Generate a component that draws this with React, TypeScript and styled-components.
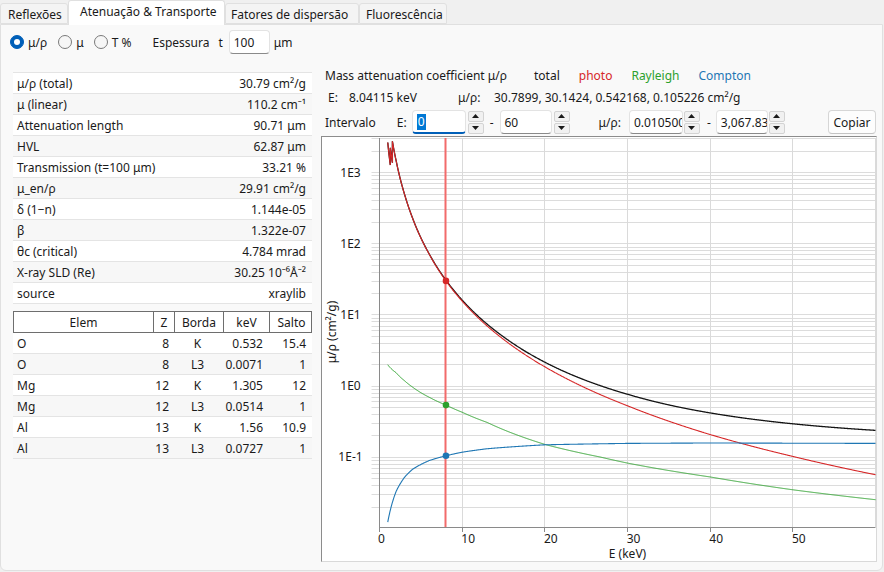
import React, { useMemo } from "react";
import styled, { createGlobalStyle } from "styled-components";

const GlobalStyle = createGlobalStyle`
  html, body { margin: 0; padding: 0; }
  body {
    background: #f0f0f0;
    font-family: "Noto Sans", "Open Sans", "DejaVu Sans", sans-serif;
    font-size: 12px;
    color: #1a1a1a;
  }
  * { box-sizing: border-box; }
`;

/* ---------- window & tabs ---------- */

const Window = styled.div`
  width: 884px;
  height: 572px;
  display: flex;
  flex-direction: column;
  overflow: hidden;
`;

const TabBar = styled.div`
  height: 24px;
  display: flex;
  align-items: flex-end;
`;

const Tab = styled.div<{ $active?: boolean; $w: number; $pl: number }>`
  position: relative;
  z-index: ${(p) => (p.$active ? 2 : 0)};
  width: ${(p) => p.$w}px;
  height: ${(p) => (p.$active ? 25 : 21)}px;
  margin-bottom: ${(p) => (p.$active ? -1 : 0)}px;
  padding-left: ${(p) => p.$pl}px;
  padding-top: 3px;
  background: ${(p) => (p.$active ? "#ffffff" : "#f4f4f4")};
  border: 1px solid #e0e0e0;
  border-bottom: ${(p) => (p.$active ? "none" : "1px solid #e0e0e0")};
  border-radius: 3px 3px 0 0;
  white-space: nowrap;
  line-height: 16px;
`;

const Pane = styled.div`
  flex: 1;
  margin: 0 1px 1px 0;
  background: #f9f9f9;
  border: 1px solid #e0e0e0;
  border-radius: 0 0 6px 6px;
  display: flex;
  flex-direction: column;
`;

/* ---------- top controls ---------- */

const ControlsRow = styled.div`
  margin-top: 5px;
  height: 24px;
  padding-left: 9px;
  display: flex;
  align-items: center;
`;

const RadioItem = styled.label<{ $ml?: number }>`
  display: inline-flex;
  align-items: center;
  gap: 4px;
  margin-left: ${(p) => p.$ml ?? 0}px;
`;

const RadioDot = styled.span<{ $on?: boolean }>`
  width: 14px;
  height: 14px;
  border-radius: 50%;
  border: 1px solid ${(p) => (p.$on ? "#005fb8" : "#7a7a7a")};
  background: ${(p) => (p.$on ? "#005fb8" : "#f6f6f6")};
  display: inline-flex;
  align-items: center;
  justify-content: center;
  &::after {
    content: "";
    width: 6px;
    height: 6px;
    border-radius: 50%;
    background: ${(p) => (p.$on ? "#ffffff" : "transparent")};
  }
`;

const Label = styled.span<{ $ml?: number; $w?: number }>`
  margin-left: ${(p) => p.$ml ?? 0}px;
  ${(p) => (p.$w ? `width: ${p.$w}px; flex: none;` : "")}
  white-space: nowrap;
`;

const TextBox = styled.div<{ $w: number; $ml?: number; $focus?: boolean }>`
  width: ${(p) => p.$w}px;
  height: 24px;
  margin-left: ${(p) => p.$ml ?? 0}px;
  flex: none;
  background: #ffffff;
  border: 1px solid #e3e3e3;
  border-bottom: ${(p) => (p.$focus ? "2px solid #005fb8" : "1px solid #8a8a8a")};
  border-radius: 4px;
  padding-left: 4px;
  display: flex;
  align-items: center;
  overflow: hidden;
  white-space: nowrap;
`;

const Selected = styled.span`
  background: #0078d4;
  color: #ffffff;
  padding: 0 1px;
  line-height: 16px;
`;

const SpinCol = styled.div<{ $ml?: number }>`
  width: 16px;
  height: 23px;
  margin-left: ${(p) => p.$ml ?? 1}px;
  flex: none;
  display: flex;
  flex-direction: column;
  gap: 1px;
`;

const SpinBtn = styled.div`
  flex: 1;
  background: #f1f1f1;
  border: 1px solid #d3d3d3;
  border-radius: 2px;
  display: flex;
  align-items: center;
  justify-content: center;
`;

const Spin: React.FC<{ ml?: number }> = ({ ml }) => (
  <SpinCol $ml={ml}>
    <SpinBtn>
      <svg width="7" height="4" viewBox="0 0 7 4">
        <path d="M0 4 L3.5 0 L7 4 Z" fill="#1a1a1a" />
      </svg>
    </SpinBtn>
    <SpinBtn>
      <svg width="7" height="4" viewBox="0 0 7 4">
        <path d="M0 0 L3.5 4 L7 0 Z" fill="#1a1a1a" />
      </svg>
    </SpinBtn>
  </SpinCol>
);

const Button = styled.button`
  margin-left: auto;
  margin-right: 1px;
  width: 48px;
  height: 24px;
  background: #fdfdfd;
  border: 1px solid #d6d6d6;
  border-bottom-color: #c4c4c4;
  border-radius: 4px;
  font: inherit;
  color: #1a1a1a;
  padding: 0;
`;

/* ---------- body ---------- */

const Body = styled.div`
  margin-top: 10px;
  display: flex;
  flex: 1;
`;

const LeftCol = styled.div`
  width: 299px;
  margin-left: 12px;
  padding-top: 8px;
  flex: none;
`;

const PropTable = styled.div`
  border-top: 1px solid #e4e4e4;
`;

const PropRow = styled.div<{ $alt?: boolean }>`
  height: 21px;
  display: flex;
  align-items: center;
  justify-content: space-between;
  padding: 0 6px 0 4px;
  background: ${(p) => (p.$alt ? "#f7f7f7" : "#ffffff")};
  border-bottom: 1px solid #e4e4e4;
  white-space: nowrap;
`;

const COLS = "139px 21px 49px 46px 44px";

const ElemTable = styled.div`
  margin-top: 7px;
`;

const ElemHead = styled.div`
  display: grid;
  grid-template-columns: ${COLS};
  height: 22px;
  background: #ffffff;
  border: 1px solid #6e6e6e;
`;

const HeadCell = styled.div<{ $first?: boolean }>`
  display: flex;
  align-items: center;
  justify-content: center;
  border-left: ${(p) => (p.$first ? "none" : "1px solid #6e6e6e")};
`;

const ElemRow = styled.div<{ $alt?: boolean }>`
  display: grid;
  grid-template-columns: ${COLS};
  height: 21px;
  background: ${(p) => (p.$alt ? "#f7f7f7" : "#ffffff")};
  border-bottom: 1px solid #e4e4e4;
`;

const Cell = styled.div<{ $align: "left" | "right" | "center"; $pr?: number }>`
  display: flex;
  align-items: center;
  justify-content: ${(p) =>
    p.$align === "left" ? "flex-start" : p.$align === "right" ? "flex-end" : "center"};
  padding-left: ${(p) => (p.$align === "left" ? 4 : 0)}px;
  padding-right: ${(p) => (p.$align === "right" ? p.$pr ?? 5 : 0)}px;
`;

const RightCol = styled.div`
  margin-left: 9px;
  width: 556px;
  flex: none;
  display: flex;
  flex-direction: column;
  padding-top: 2px;
`;

const InfoLine = styled.div<{ $pl: number; $mt?: number }>`
  height: 18px;
  margin-top: ${(p) => p.$mt ?? 0}px;
  padding-left: ${(p) => p.$pl}px;
  display: flex;
  align-items: center;
  white-space: nowrap;
`;

const Legend = styled.span<{ $color: string; $ml: number }>`
  color: ${(p) => p.$color};
  margin-left: ${(p) => p.$ml}px;
`;

const RangeRow = styled.div`
  margin-top: 4px;
  height: 24px;
  padding-left: 4px;
  display: flex;
  align-items: center;
  white-space: nowrap;
`;

const ChartFrame = styled.div`
  margin-top: 2px;
  height: 426px;
  background: #ffffff;
  border-top: 1px solid #8c8c8c;
  border-left: 1px solid #8c8c8c;
  border-right: 1px solid #d9d9d9;
  border-bottom: 1px solid #d9d9d9;
  display: flex;
`;

/* ---------- data ---------- */

type Pt = [number, number];

// photoelectric absorption of the compound (cm²/g), with the Mg and Al K edges
const PHOTO: Pt[] = [
  [1.0, 2648], [1.3049, 1278], [1.305, 2228], [1.5599, 1378], [1.56, 2758],
  [2.0, 1494], [3.0, 509], [4.0, 229], [5.0, 121], [6.0, 71.8],
  [8.04115, 30.1424], [10, 15.65], [15, 4.55], [20, 1.87], [30, 0.53],
  [40, 0.209], [50, 0.103], [60, 0.057],
];

const RAYLEIGH: Pt[] = [
  [1.0, 2.0], [2.0, 1.55], [3.0, 1.2], [4.0, 0.97], [6.0, 0.70],
  [8.04115, 0.542168], [10, 0.43], [13, 0.31], [20, 0.152], [26.7, 0.101],
  [30, 0.083], [40, 0.053], [50, 0.035], [60, 0.0254],
];

const COMPTON: Pt[] = [
  [1.0, 0.0123], [1.5, 0.022], [2.0, 0.033], [3.0, 0.052], [4.0, 0.068],
  [6.0, 0.09], [8.04115, 0.105226], [10, 0.118], [13, 0.132], [20, 0.15],
  [30, 0.157], [40, 0.159], [50, 0.158], [60, 0.157],
];

const interp = (table: Pt[], e: number): number => {
  if (e <= table[0][0]) return table[0][1];
  for (let i = 0; i < table.length - 1; i++) {
    const [e0, v0] = table[i];
    const [e1, v1] = table[i + 1];
    if (e >= e0 && e <= e1) {
      const t = (Math.log(e) - Math.log(e0)) / (Math.log(e1) - Math.log(e0));
      return Math.exp(Math.log(v0) + t * (Math.log(v1) - Math.log(v0)));
    }
  }
  return table[table.length - 1][1];
};

const E_CUR = 8.04115;
const V_MAX = 3067.83;
const V_MIN = 0.0105;

// plot area inside the chart frame (svg coordinates)
const PL = 57.5;
const PR = 553.5;
const PT = 1;
const PB = 390;

const xOf = (e: number) => PL + (e / 60) * (PR - PL);
const yOf = (v: number) =>
  PT + ((Math.log10(V_MAX) - Math.log10(v)) / (Math.log10(V_MAX) - Math.log10(V_MIN))) * (PB - PT);

const crisp = (v: number) => Math.floor(v) + 0.5;

const Chart: React.FC = () => {
  const { total, photo, rayl, comp, hLines } = useMemo(() => {
    const es = new Set<number>();
    for (let e = 1.0; e <= 60.0001; e += 0.05) es.add(Math.round(e * 1000) / 1000);
    PHOTO.forEach(([e]) => es.add(e));
    const list = Array.from(es).sort((a, b) => a - b);
    const path = (f: (e: number) => number) =>
      list
        .map((e, i) => `${i ? "L" : "M"}${xOf(e).toFixed(2)},${yOf(f(e)).toFixed(2)}`)
        .join("");
    const lines: number[] = [];
    for (let d = -2; d <= 3; d++) {
      for (let m = 1; m <= 9; m++) {
        const v = m * Math.pow(10, d);
        if (v >= V_MIN && v <= V_MAX) lines.push(crisp(yOf(v)));
      }
    }
    return {
      total: path((e) => interp(PHOTO, e) + interp(RAYLEIGH, e) + interp(COMPTON, e)),
      photo: path((e) => interp(PHOTO, e)),
      rayl: path((e) => interp(RAYLEIGH, e)),
      comp: path((e) => interp(COMPTON, e)),
      hLines: lines,
    };
  }, []);

  const xc = crisp(xOf(E_CUR));
  const decades = [3, 2, 1, 0, -1];

  return (
    <svg width="554" height="424" viewBox="0 0 554 424" fontFamily="Noto Sans, Open Sans, sans-serif" fontSize="12">
      <defs>
        <clipPath id="plot-area">
          <rect x={PL} y={PT} width={PR - PL + 1} height={PB - PT} />
        </clipPath>
      </defs>

      {hLines.map((y, i) => (
        <line key={`h${i}`} x1={PL - 8} x2={PR} y1={y} y2={y} stroke="#dcdcdc" strokeWidth="1" />
      ))}
      {[10, 20, 30, 40, 50, 60].map((e) => (
        <line key={`v${e}`} x1={crisp(xOf(e))} x2={crisp(xOf(e))} y1={PT} y2={PB} stroke="#dadada" strokeWidth="1" />
      ))}

      <line x1={PL} x2={PL} y1={PT} y2={PB + 0.5} stroke="#8a8a8a" strokeWidth="1" />
      <line x1={PL} x2={PR} y1={PB + 0.5} y2={PB + 0.5} stroke="#8a8a8a" strokeWidth="1" />
      {[0, 10, 20, 30, 40, 50].map((e) => (
        <line key={`t${e}`} x1={crisp(xOf(e))} x2={crisp(xOf(e))} y1={PB} y2={PB + 5} stroke="#8a8a8a" strokeWidth="1" />
      ))}

      {decades.map((d) => (
        <text key={`y${d}`} x="28.5" y={yOf(Math.pow(10, d)) + 4} textAnchor="middle" fill="#1a1a1a">
          {`1E${d}`}
        </text>
      ))}
      {[0, 10, 20, 30, 40, 50].map((e) => (
        <text key={`x${e}`} x={xOf(e) + (e === 0 ? 2 : 6)} y="406" textAnchor="middle" fill="#1a1a1a">
          {e}
        </text>
      ))}
      <text x={(PL + PR) / 2} y="420.5" textAnchor="middle" fill="#1a1a1a">E (keV)</text>
      <text transform="translate(13.5 195) rotate(-90)" textAnchor="middle" fill="#1a1a1a">
        μ/ρ (cm²/g)
      </text>

      <g clipPath="url(#plot-area)">
        <line x1={xc} x2={xc} y1={PT - 1} y2={PB} stroke="#f26b6b" strokeWidth="2" />
        <path d={total} fill="none" stroke="#141414" strokeWidth="1.3" />
        <path d={photo} fill="none" stroke="#d62728" strokeWidth="1.1" />
        <path d={rayl} fill="none" stroke="#2ca02c" strokeWidth="1" />
        <path d={comp} fill="none" stroke="#1f77b4" strokeWidth="1.1" />
      </g>

      <circle cx={xOf(E_CUR)} cy={yOf(30.1424)} r="3.3" fill="#d62728" />
      <circle cx={xOf(E_CUR)} cy={yOf(0.542168)} r="3.3" fill="#2ca02c" />
      <circle cx={xOf(E_CUR)} cy={yOf(0.105226)} r="3.3" fill="#1f77b4" />
    </svg>
  );
};

const PROPS: [string, string][] = [
  ["μ/ρ (total)", "30.79 cm²/g"],
  ["μ (linear)", "110.2 cm⁻¹"],
  ["Attenuation length", "90.71 μm"],
  ["HVL", "62.87 μm"],
  ["Transmission (t=100 μm)", "33.21 %"],
  ["μ_en/ρ", "29.91 cm²/g"],
  ["δ (1−n)", "1.144e-05"],
  ["β", "1.322e-07"],
  ["θc (critical)", "4.784 mrad"],
  ["X-ray SLD (Re)", "30.25 10⁻⁶Å⁻²"],
  ["source", "xraylib"],
];

const EDGES: [string, number, string, string, string][] = [
  ["O", 8, "K", "0.532", "15.4"],
  ["O", 8, "L3", "0.0071", "1"],
  ["Mg", 12, "K", "1.305", "12"],
  ["Mg", 12, "L3", "0.0514", "1"],
  ["Al", 13, "K", "1.56", "10.9"],
  ["Al", 13, "L3", "0.0727", "1"],
];

export default function App() {
  return (
    <>
      <GlobalStyle />
      <Window>
        <TabBar>
          <Tab $w={68} $pl={7}>Reflexões</Tab>
          <Tab $w={157} $pl={11} $active>Atenuação &amp; Transporte</Tab>
          <Tab $w={134} $pl={5}>Fatores de dispersão</Tab>
          <Tab $w={88} $pl={6}>Fluorescência</Tab>
        </TabBar>
        <Pane>
          <ControlsRow>
            <RadioItem>
              <RadioDot $on />
              μ/ρ
            </RadioItem>
            <RadioItem $ml={11}>
              <RadioDot />
              μ
            </RadioItem>
            <RadioItem $ml={10}>
              <RadioDot />
              T %
            </RadioItem>
            <Label $ml={21}>Espessura</Label>
            <Label $ml={9}>t</Label>
            <TextBox $w={41} $ml={6}>100</TextBox>
            <Label $ml={4}>μm</Label>
          </ControlsRow>

          <Body>
            <LeftCol>
              <PropTable>
                {PROPS.map(([k, v], i) => (
                  <PropRow key={k} $alt={i % 2 === 1}>
                    <span>{k}</span>
                    <span>{v}</span>
                  </PropRow>
                ))}
              </PropTable>

              <ElemTable>
                <ElemHead>
                  <HeadCell $first>Elem</HeadCell>
                  <HeadCell>Z</HeadCell>
                  <HeadCell>Borda</HeadCell>
                  <HeadCell>keV</HeadCell>
                  <HeadCell>Salto</HeadCell>
                </ElemHead>
                {EDGES.map(([el, z, edge, kev, jump], i) => (
                  <ElemRow key={`${el}${edge}`} $alt={i % 2 === 1}>
                    <Cell $align="left">{el}</Cell>
                    <Cell $align="right" $pr={4}>{z}</Cell>
                    <Cell $align="center">{edge}</Cell>
                    <Cell $align="right" $pr={5}>{kev}</Cell>
                    <Cell $align="right" $pr={6}>{jump}</Cell>
                  </ElemRow>
                ))}
              </ElemTable>
            </LeftCol>

            <RightCol>
              <InfoLine $pl={4}>
                <span>Mass attenuation coefficient μ/ρ</span>
                <Legend $color="#1a1a1a" $ml={27}>total</Legend>
                <Legend $color="#d62728" $ml={19}>photo</Legend>
                <Legend $color="#2ca02c" $ml={19}>Rayleigh</Legend>
                <Legend $color="#1f77b4" $ml={19}>Compton</Legend>
              </InfoLine>
              <InfoLine $pl={7} $mt={4}>
                <Label $w={21}>E:</Label>
                <Label $w={109}>8.04115 keV</Label>
                <Label $w={36}>μ/ρ:</Label>
                <span>30.7899, 30.1424, 0.542168, 0.105226 cm²/g</span>
              </InfoLine>
              <RangeRow>
                <Label>Intervalo</Label>
                <Label $ml={21}>E:</Label>
                <TextBox $w={54} $ml={5} $focus>
                  <Selected>0</Selected>
                </TextBox>
                <Spin ml={2} />
                <Label $ml={6}>-</Label>
                <TextBox $w={52} $ml={6}>60</TextBox>
                <Spin ml={2} />
                <Label $ml={29}>μ/ρ:</Label>
                <TextBox $w={54} $ml={8}>0.010500</TextBox>
                <Spin ml={1} />
                <Label $ml={7}>-</Label>
                <TextBox $w={52} $ml={5}>3,067.83</TextBox>
                <Spin ml={1} />
                <Button>Copiar</Button>
              </RangeRow>
              <ChartFrame>
                <Chart />
              </ChartFrame>
            </RightCol>
          </Body>
        </Pane>
      </Window>
    </>
  );
}
